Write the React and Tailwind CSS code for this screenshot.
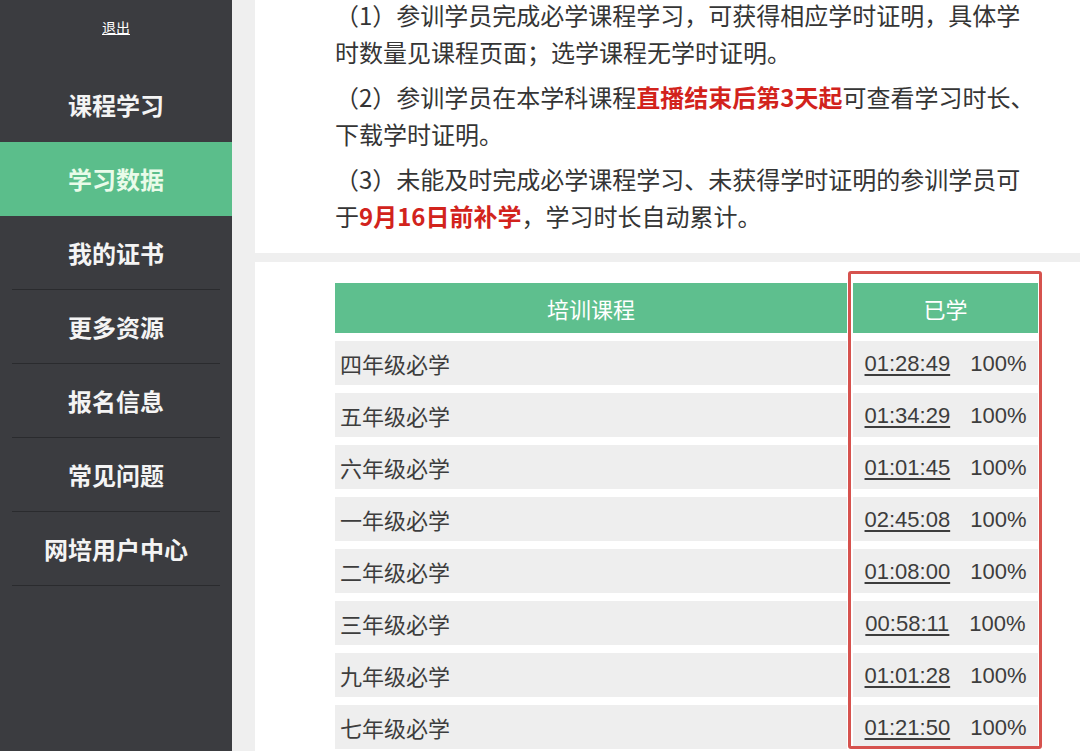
import React from "react";

const cjk = { fontFamily: '"Noto Sans CJK SC", "Noto Sans", sans-serif' };
const latin = { fontFamily: '"Liberation Sans", Arial, sans-serif' };

const menu = [
  { label: "课程学习" },
  { label: "学习数据", active: true },
  { label: "我的证书" },
  { label: "更多资源" },
  { label: "报名信息" },
  { label: "常见问题" },
  { label: "网培用户中心" },
];

const courses = [
  { name: "四年级必学", time: "01:28:49", pct: "100%" },
  { name: "五年级必学", time: "01:34:29", pct: "100%" },
  { name: "六年级必学", time: "01:01:45", pct: "100%" },
  { name: "一年级必学", time: "02:45:08", pct: "100%" },
  { name: "二年级必学", time: "01:08:00", pct: "100%" },
  { name: "三年级必学", time: "00:58:11", pct: "100%" },
  { name: "九年级必学", time: "01:01:28", pct: "100%" },
  { name: "七年级必学", time: "01:21:50", pct: "100%" },
];

const Sidebar = () => (
  <aside className="w-[232px] shrink-0 bg-[#3b3c40] text-white" style={cjk}>
    <div className="h-[68px] pt-[14px] text-center">
      <a className="text-[14px] leading-[20px] underline">退出</a>
    </div>
    {menu.map((item, i) => (
      <div key={item.label} className={item.active ? "bg-[#5bbe8b]" : ""}>
        <div
          className={`h-[74px] flex items-center justify-center text-[24px] font-bold ${
            item.active ? "text-[#e9fbe9]" : "text-[#f4f4f4]"
          } ${i > 1 ? "mx-3 border-b border-[#2a2b2e]" : ""}`}
        >
          {item.label}
        </div>
      </div>
    ))}
  </aside>
);

const Notice = () => (
  <section
    className="-mt-[4px] bg-white pl-[80px] pb-[19px] text-[24px] leading-[37px] text-[#353535] whitespace-nowrap"
    style={cjk}
  >
    <p>
      （1）参训学员完成必学课程学习，可获得相应学时证明，具体学
      <br />
      时数量见课程页面；选学课程无学时证明。
    </p>
    <p className="mt-[8px]">
      （2）参训学员在本学科课程
      <b className="text-[#d2231c]">直播结束后第3天起</b>
      可查看学习时长、
      <br />
      下载学时证明。
    </p>
    <p className="mt-[8px]">
      （3）未能及时完成必学课程学习、未获得学时证明的参训学员可
      <br />于<b className="text-[#d2231c]">9月16日前补学</b>，学习时长自动累计。
    </p>
  </section>
);

const CourseTable = () => (
  <section className="flex-1 bg-white pl-[80px] pt-[21px]">
    <div className="relative w-[703px]">
      <div className="grid grid-cols-[512px_185px] gap-x-[6px] gap-y-[8px]">
        <div
          className="h-[50px] flex items-center justify-center bg-[#5ebf8e] text-white text-[22px]"
          style={cjk}
        >
          培训课程
        </div>
        <div
          className="h-[50px] flex items-center justify-center bg-[#5ebf8e] text-white text-[22px]"
          style={cjk}
        >
          已学
        </div>
        {courses.map((c) => (
          <React.Fragment key={c.name}>
            <div
              className="h-[44px] flex items-center pl-[5px] bg-[#eeeeee] text-[22px] text-[#3d3d3d]"
              style={cjk}
            >
              {c.name}
            </div>
            <div
              className="h-[44px] flex items-center justify-center gap-[20px] bg-[#eeeeee] text-[22px] text-[#3d3d3d]"
              style={latin}
            >
              <span className="underline underline-offset-[3px]">{c.time}</span>
              <span>{c.pct}</span>
            </div>
          </React.Fragment>
        ))}
      </div>
      {/* highlight frame around the progress column */}
      <div className="absolute left-[513px] top-[-12px] w-[194px] h-[478px] border-[3px] border-[#d6524e] rounded-[3px] pointer-events-none" />
    </div>
  </section>
);

export default function App() {
  return (
    <div className="flex h-[751px] overflow-hidden bg-[#efefef]">
      <Sidebar />
      <main className="flex-1 flex flex-col gap-[9px] pl-[23px]">
        <Notice />
        <CourseTable />
      </main>
    </div>
  );
}
